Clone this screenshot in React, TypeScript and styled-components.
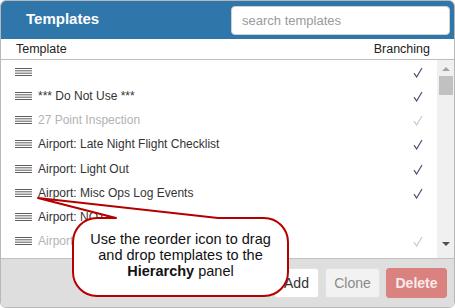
import React from 'react';
import styled, { createGlobalStyle } from 'styled-components';

const GlobalStyle = createGlobalStyle`
  html, body {
    margin: 0;
    padding: 0;
    background: #fff;
    font-family: "Liberation Sans", Arial, sans-serif;
  }
`;

type Template = {
  name: string;
  disabled?: boolean;
  branching: boolean;
};

const templates: Template[] = [
  { name: '', branching: true },
  { name: '*** Do Not Use ***', branching: true },
  { name: '27 Point Inspection', disabled: true, branching: true },
  { name: 'Airport: Late Night Flight Checklist', branching: true },
  { name: 'Airport: Light Out', branching: true },
  { name: 'Airport: Misc Ops Log Events', branching: true },
  { name: 'Airport: NOTAM Review', branching: false },
  { name: 'Airport: Periodic Condition Inspections', disabled: true, branching: true },
];

const ReorderIcon = () => (
  <svg width="17" height="8" viewBox="0 0 17 8">
    <g stroke="#5c5c5c" strokeWidth="1">
      <line x1="0" y1="0.5" x2="17" y2="0.5" />
      <line x1="0" y1="2.8" x2="17" y2="2.8" />
      <line x1="0" y1="5.2" x2="17" y2="5.2" />
      <line x1="0" y1="7.5" x2="17" y2="7.5" />
    </g>
  </svg>
);

const Check = ({ muted }: { muted?: boolean }) => (
  <svg width="10" height="11" viewBox="0 0 10 11">
    <path
      d="M1 6.2 L3.6 10 L9 1"
      fill="none"
      stroke={muted ? '#c9c9c9' : '#4a4f7a'}
      strokeWidth="1.2"
    />
  </svg>
);

const Callout = () => (
  <CalloutWrap>
    <svg width="300" height="110" viewBox="0 0 300 110">
      <path
        d="M38 198 L218 218 H264 A24 24 0 0 1 288 242 V272 A24 24 0 0 1 264 296 H97 A24 24 0 0 1 73 272 V242 A24 24 0 0 1 97 218 H116 Z"
        transform="translate(0 -190)"
        fill="#fff"
        stroke="#b60000"
        strokeWidth="2"
        strokeLinejoin="round"
      />
    </svg>
    <CalloutText>
      Use the reorder icon to drag
      <br />
      and drop templates to the
      <br />
      <b>Hierarchy</b> panel
    </CalloutText>
  </CalloutWrap>
);

export default function App() {
  return (
    <>
      <GlobalStyle />
      <Panel>
        <Header>
          <Title>Templates</Title>
          <Search placeholder="search templates" />
        </Header>
        <ColumnHeader>
          <span>Template</span>
          <span>Branching</span>
        </ColumnHeader>
        <ListArea>
          <Rows>
            {templates.map((t, i) => (
              <Row key={i} disabled={t.disabled}>
                <ReorderIcon />
                <Name>{t.name}</Name>
                <CheckCell>{t.branching && <Check muted={t.disabled} />}</CheckCell>
              </Row>
            ))}
          </Rows>
          <ScrollTrack>
            <Arrow dir="up" />
            <Thumb />
            <Spacer />
            <Arrow dir="down" />
          </ScrollTrack>
        </ListArea>
        <Footer>
          <Button width={45}>Add</Button>
          <Button width={55} variant="muted">
            Clone
          </Button>
          <Button width={61} variant="danger">
            Delete
          </Button>
        </Footer>
        <Callout />
      </Panel>
    </>
  );
}

const Panel = styled.div`
  position: relative;
  width: 455px;
  height: 308px;
  box-sizing: border-box;
  border: 1px solid #b8b8b8;
  border-radius: 6px;
  overflow: hidden;
  display: flex;
  flex-direction: column;
  background: #fff;
`;

const Header = styled.div`
  height: 38px;
  flex: none;
  background: #2f76ab;
  display: flex;
  align-items: center;
  justify-content: space-between;
  padding: 0 4px 0 25px;
`;

const Title = styled.h1`
  margin: 0 0 3px;
  color: #fff;
  font-size: 15px;
  font-weight: bold;
`;

const Search = styled.input`
  width: 219px;
  height: 29px;
  box-sizing: border-box;
  border: 1px solid #d0d0d0;
  border-radius: 4px;
  padding: 0 10px;
  font-family: inherit;
  font-size: 13px;
  color: #333;
  outline: none;
  margin-top: 1px;
  &::placeholder {
    color: #9a9a9a;
  }
`;

const ColumnHeader = styled.div`
  height: 20px;
  flex: none;
  display: flex;
  align-items: center;
  justify-content: space-between;
  padding: 0 24px 0 15px;
  border-bottom: 1px solid #bdbdbd;
  font-size: 12.5px;
  color: #222;
`;

const ListArea = styled.div`
  flex: 1;
  display: flex;
  min-height: 0;
`;

const Rows = styled.div`
  flex: 1;
  overflow: hidden;
`;

const Row = styled.div<{ disabled?: boolean }>`
  height: 24.15px;
  display: flex;
  align-items: center;
  padding-left: 14px;
  font-size: 12px;
  color: ${({ disabled }) => (disabled ? '#b3b3b3' : '#333')};
  white-space: nowrap;
`;

const Name = styled.span`
  flex: 1;
  margin-left: 6px;
`;

const CheckCell = styled.span`
  width: 24px;
  display: flex;
  align-items: center;
  padding-top: 1px;
`;

const ScrollTrack = styled.div`
  width: 17px;
  flex: none;
  background: #f0f0f0;
  display: flex;
  flex-direction: column;
  align-items: center;
`;

const Arrow = styled.div<{ dir: 'up' | 'down' }>`
  width: 0;
  height: 0;
  margin: 7px 0 5px;
  border-left: 4px solid transparent;
  border-right: 4px solid transparent;
  ${({ dir }) =>
    dir === 'up' ? 'border-bottom: 4px solid #a3a3a3;' : 'border-top: 4px solid #505050; margin: 6px 0 12px;'}
`;

const Thumb = styled.div`
  width: 14px;
  height: 19px;
  background: #c1c1c1;
`;

const Spacer = styled.div`
  flex: 1;
`;

const Footer = styled.div`
  height: 48px;
  flex: none;
  background: #dedede;
  border-top: 1px solid #c0c0c0;
  display: flex;
  align-items: center;
  justify-content: flex-end;
  gap: 6px;
  padding: 0 7px 0 0;
`;

const Button = styled.button<{ variant?: 'muted' | 'danger'; width: number }>`
  width: ${({ width }) => width}px;
  height: 30px;
  padding: 0;
  border-radius: 3px;
  font-family: inherit;
  font-size: 14px;
  border: 1px solid ${({ variant }) => (variant === 'danger' ? '#d9827f' : '#e2e2e2')};
  background: ${({ variant }) =>
    variant === 'danger' ? '#d9827f' : variant === 'muted' ? '#f2f2f2' : '#fff'};
  color: ${({ variant }) =>
    variant === 'danger' ? '#fbeaea' : variant === 'muted' ? '#8a8a8a' : '#333'};
  font-weight: ${({ variant }) => (variant === 'danger' ? 'bold' : 'normal')};
`;

const CalloutWrap = styled.div`
  position: absolute;
  left: -1px;
  top: 189px;
  width: 300px;
  height: 110px;
  svg {
    position: absolute;
    left: 0;
    top: 0;
  }
`;

const CalloutText = styled.div`
  position: absolute;
  left: 73px;
  top: 41px;
  width: 215px;
  text-align: center;
  font-size: 14.5px;
  line-height: 16px;
  color: #111;
  b {
    font-weight: bold;
  }
`;
